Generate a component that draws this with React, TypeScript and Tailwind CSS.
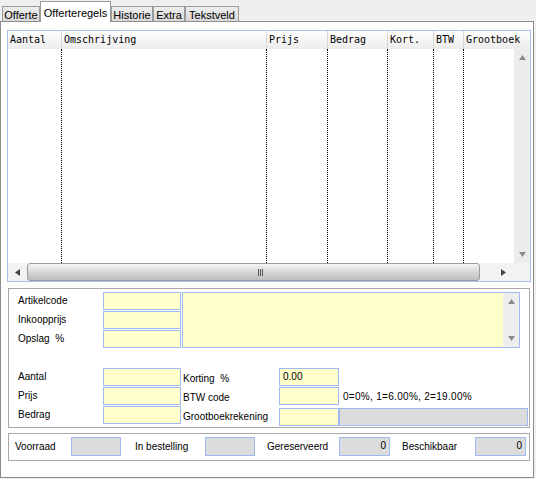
import clsx from "clsx";

const tabs = ["Offerte", "Offerteregels", "Historie", "Extra", "Tekstveld"];

// column widths incl. right border (first 6), last takes the rest
const columns = [
  { label: "Aantal", w: "w-[54px]" },
  { label: "Omschrijving", w: "w-[205px]" },
  { label: "Prijs", w: "w-[61px]" },
  { label: "Bedrag", w: "w-[60px]" },
  { label: "Kort.", w: "w-[46px]" },
  { label: "BTW", w: "w-[30px]" },
];

function Arrow({ dir, className }: { dir: "up" | "down" | "left" | "right"; className?: string }) {
  const pts = {
    up: "0,5 7,5 3.5,0",
    down: "0,0 7,0 3.5,5",
    left: "5,0 5,7 0,3.5",
    right: "0,0 0,7 5,3.5",
  }[dir];
  const vb = dir === "up" || dir === "down" ? "0 0 7 5" : "0 0 5 7";
  const size = dir === "up" || dir === "down" ? "w-[7px] h-[5px]" : "w-[5px] h-[7px]";
  return (
    <svg viewBox={vb} className={clsx(size, className)}>
      <polygon points={pts} fill="currentColor" />
    </svg>
  );
}

function Field({
  className,
  value,
  gray,
  right,
}: {
  className?: string;
  value?: string;
  gray?: boolean;
  right?: boolean;
}) {
  return (
    <div
      className={clsx(
        "h-[18px] border border-[#9fbaf0] px-[3px] text-[10px] leading-[16px] text-black",
        gray ? "bg-[#dcdcdc]" : "bg-[#ffffcc]",
        right && "text-right",
        className
      )}
    >
      {value}
    </div>
  );
}

function Label({ children, className }: { children: React.ReactNode; className?: string }) {
  return (
    <div className={clsx("text-[10px] leading-[18px] text-black whitespace-pre", className)}>
      {children}
    </div>
  );
}

export default function App() {
  return (
    <div className="w-[536px] h-[479px] overflow-hidden bg-[#efefef] font-['Liberation_Sans',Arial,sans-serif]">
      {/* Tabs */}
      <div className="flex h-[21px] items-end pl-[2px]">
        {tabs.map((t) =>
          t === "Offerteregels" ? (
            <div
              key={t}
              className="relative z-10 -mb-px flex h-[21px] w-[71px] items-start justify-center border border-b-0 border-[#9a9a9a] bg-white pt-[4px] text-[11px] leading-[14px]"
            >
              {t}
            </div>
          ) : (
            <div
              key={t}
              className={clsx(
                "flex h-[15px] items-center justify-center border border-b-0 border-[#9a9a9a] bg-gradient-to-b from-[#eeeeee] to-[#d9d9d9] pt-[1px] text-[11px] leading-[12px]",
                t === "Offerte" && "w-[38px]",
                t === "Historie" && "w-[42px]",
                t === "Extra" && "w-[32px]",
                t === "Tekstveld" && "w-[54px]"
              )}
            >
              {t}
            </div>
          )
        )}
      </div>

      {/* Panel */}
      <div className="h-[457px] w-[534px] border border-[#8c8c8c] bg-white">
        {/* Table */}
        <div className="ml-[6px] mt-[8px] flex h-[252px] w-[524px] flex-col border border-[#a8c2f0]">
          <div className="flex h-[18px] bg-gradient-to-b from-white to-[#ececec] font-['DejaVu_Sans_Mono',monospace] text-[10px] leading-[18px]">
            {columns.map((c) => (
              <div key={c.label} className={clsx(c.w, "border-r border-[#d6d6d6] pl-[2px]")}>
                {c.label}
              </div>
            ))}
            <div className="flex-1 pl-[2px]">Grootboek</div>
          </div>
          <div className="flex h-[214px]">
            {columns.map((c) => (
              <div key={c.label} className={clsx(c.w, "border-r border-dotted border-black")} />
            ))}
            <div className="flex-1" />
            <div className="flex w-[16px] flex-col items-center justify-between bg-[#ececec] py-[6px] text-[#8a8a8a]">
              <Arrow dir="up" />
              <Arrow dir="down" />
            </div>
          </div>
          <div className="flex h-[18px]">
            <div className="flex w-[19px] items-center justify-center bg-[#f3f3f3] text-[#444]">
              <Arrow dir="left" />
            </div>
            <div className="flex h-[18px] w-[453px] items-center justify-center rounded-[3px] border border-[#9a9a9a] bg-gradient-to-b from-[#f4f4f4] to-[#bdbdbd]">
              <div className="ml-[14px] flex gap-[1px]">
                <div className="h-[7px] w-[1px] bg-[#555]" />
                <div className="h-[7px] w-[1px] bg-[#555]" />
                <div className="h-[7px] w-[1px] bg-[#555]" />
              </div>
            </div>
            <div className="flex flex-1 items-center justify-end bg-[#f3f3f3] pr-[8px] text-[#444]">
              <Arrow dir="right" />
            </div>
            <div className="w-[16px] bg-[#f3f3f3]" />
          </div>
        </div>

        {/* Article details */}
        <div className="ml-[7px] mt-[6px] h-[140px] w-[522px] border border-[#a8a8a8] pl-[9px] pt-[3px]">
          <div className="flex h-[56px]">
            <div className="flex w-[85px] flex-col gap-[1px]">
              <Label>Artikelcode</Label>
              <Label>Inkoopprijs</Label>
              <Label>Opslag  %</Label>
            </div>
            <div className="flex w-[78px] flex-col gap-[1px]">
              <Field />
              <Field />
              <Field />
            </div>
            <div className="ml-[1px] flex h-[56px] w-[338px] border border-[#9fbaf0] bg-[#ffffcc]">
              <div className="flex-1" />
              <div className="flex w-[16px] flex-col items-center justify-between bg-[#eeeeee] py-[6px] text-[#8a8a8a]">
                <Arrow dir="up" />
                <Arrow dir="down" />
              </div>
            </div>
          </div>

          <div className="mt-[20px] flex">
            <div className="flex w-[85px] flex-col gap-[1px]">
              <Label>Aantal</Label>
              <Label>Prijs</Label>
              <Label>Bedrag</Label>
            </div>
            <div className="flex w-[78px] flex-col gap-[1px]">
              <Field />
              <Field />
              <Field />
            </div>
            <div className="ml-[2px] flex w-[96px] flex-col gap-[1px] pt-[2px]">
              <Label>Korting  %</Label>
              <Label>BTW code</Label>
              <Label>Grootboekrekening</Label>
            </div>
            <div className="flex flex-col gap-[1px]">
              <div className="flex">
                <Field className="w-[60px]" value="0.00" />
              </div>
              <div className="flex">
                <Field className="w-[60px]" />
                <div className="pl-[4px] text-[10px] leading-[20px] tracking-[0.3px]">
                  0=0%, 1=6.00%, 2=19.00%
                </div>
              </div>
              <div className="flex">
                <Field className="w-[60px]" />
                <Field className="w-[189px]" gray />
              </div>
            </div>
          </div>
        </div>

        {/* Stock */}
        <div className="ml-[7px] mt-[5px] flex h-[28px] w-[522px] items-start border border-[#a8a8a8] pl-[6px] pt-[3px]">
          <Label className="w-[56px] leading-[19px]">Voorraad</Label>
          <Field className="h-[19px] w-[50px]" gray />
          <Label className="ml-[14px] w-[70px] leading-[19px]">In bestelling</Label>
          <Field className="h-[19px] w-[50px]" gray />
          <Label className="ml-[12px] w-[72px] leading-[19px]">Gereserveerd</Label>
          <Field className="h-[19px] w-[51px]" gray right value="0" />
          <Label className="ml-[12px] w-[73px] leading-[19px]">Beschikbaar</Label>
          <Field className="h-[19px] w-[51px]" gray right value="0" />
        </div>
      </div>
    </div>
  );
}
